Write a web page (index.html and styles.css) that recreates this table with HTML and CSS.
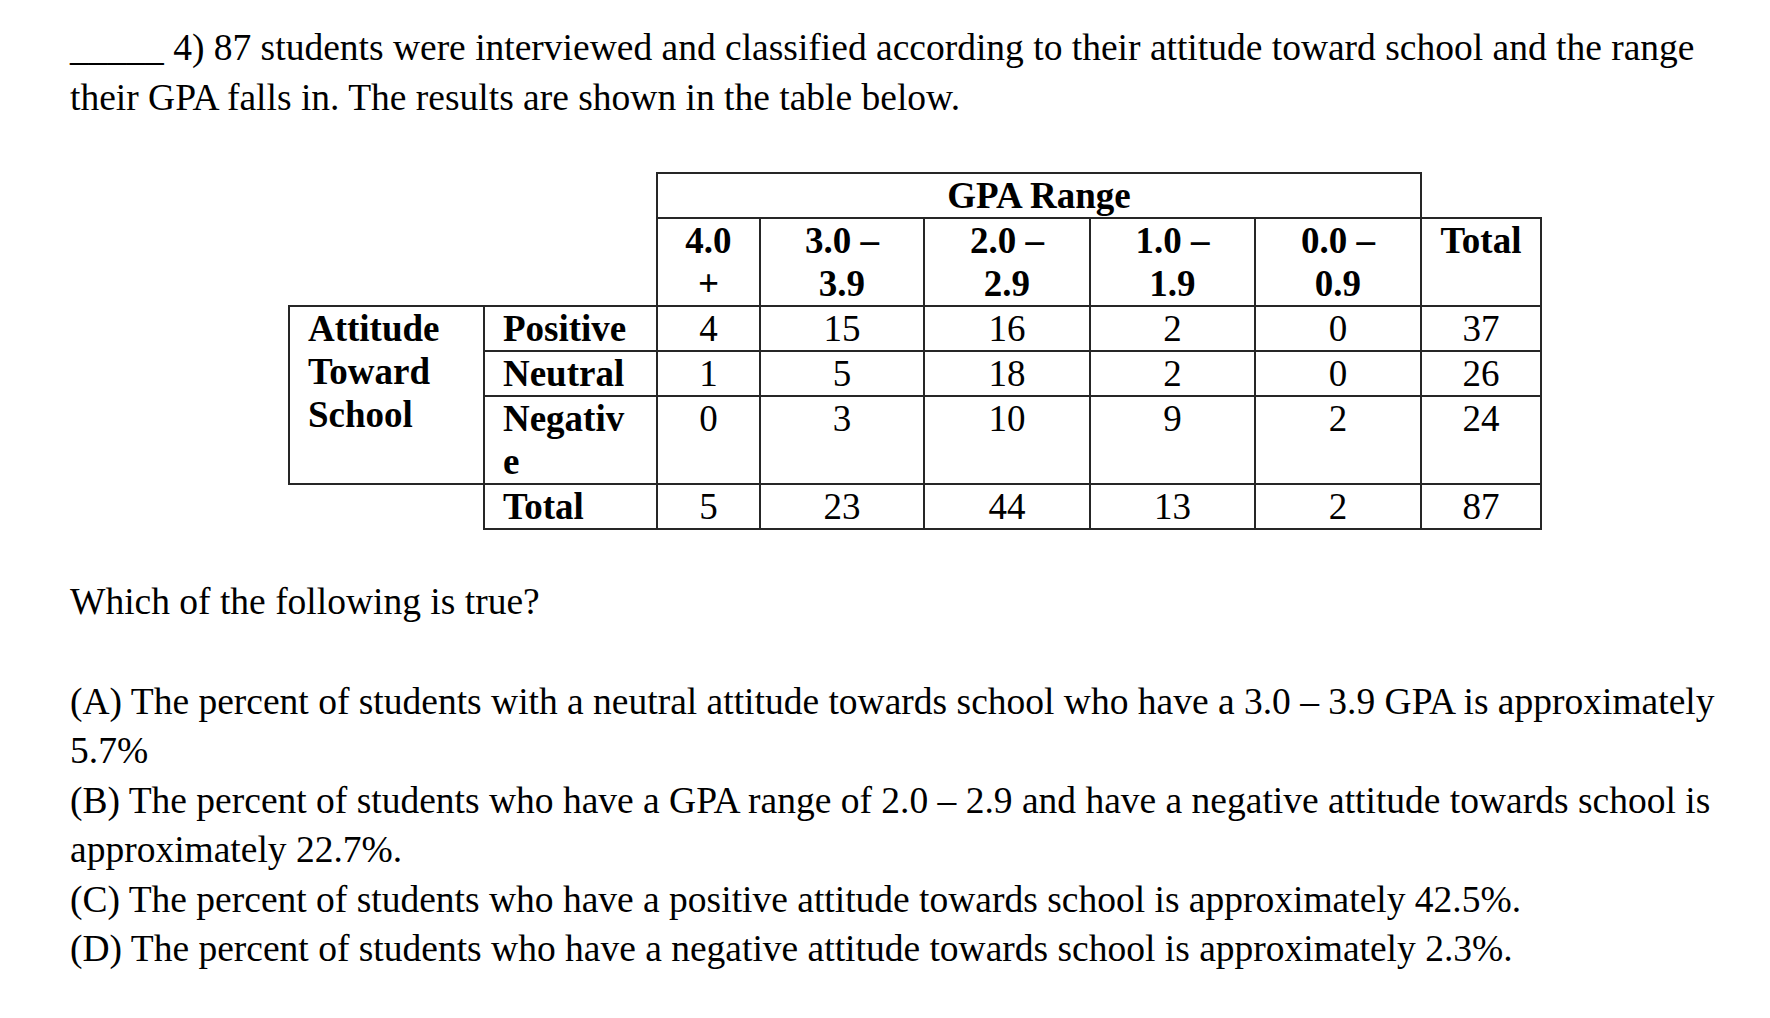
FILE: index.html
```html
<!DOCTYPE html>
<html lang="en">
<head>
<meta charset="utf-8">
<title>GPA attitude question</title>
<link rel="stylesheet" href="styles.css">
</head>
<body>
<div class="page">
  <p class="para intro"><span class="blank">_____</span> 4) 87 students were interviewed and classified according to their attitude toward school and the range their GPA falls in. The results are shown in the table below.</p>

  <table class="grid">
    <colgroup>
      <col class="c-att">
      <col class="c-lab">
      <col class="c-40">
      <col class="c-30">
      <col class="c-20">
      <col class="c-10">
      <col class="c-00">
      <col class="c-tot">
    </colgroup>
    <tr>
      <td class="empty"></td>
      <td class="empty"></td>
      <th colspan="5" class="head">GPA Range</th>
      <td class="empty"></td>
    </tr>
    <tr>
      <td class="empty"></td>
      <td class="empty"></td>
      <th class="head">4.0 +</th>
      <th class="head">3.0 – 3.9</th>
      <th class="head">2.0 – 2.9</th>
      <th class="head">1.0 – 1.9</th>
      <th class="head">0.0 – 0.9</th>
      <th class="head">Total</th>
    </tr>
    <tr>
      <th rowspan="3" class="label">Attitude Toward School</th>
      <th class="label">Positive</th>
      <td>4</td><td>15</td><td>16</td><td>2</td><td>0</td><td>37</td>
    </tr>
    <tr>
      <th class="label">Neutral</th>
      <td>1</td><td>5</td><td>18</td><td>2</td><td>0</td><td>26</td>
    </tr>
    <tr>
      <th class="label break">Negative</th>
      <td>0</td><td>3</td><td>10</td><td>9</td><td>2</td><td>24</td>
    </tr>
    <tr>
      <td class="empty"></td>
      <th class="label">Total</th>
      <td>5</td><td>23</td><td>44</td><td>13</td><td>2</td><td>87</td>
    </tr>
  </table>

  <p class="para ask">Which of the following is true?</p>

  <div class="options">
    <p class="opt">(A) The percent of students with a neutral attitude towards school who have a 3.0 – 3.9 GPA is approximately 5.7%</p>
    <p class="opt">(B) The percent of students who have a GPA range of 2.0 – 2.9 and have a negative attitude towards school is approximately 22.7%.</p>
    <p class="opt">(C) The percent of students who have a positive attitude towards school is approximately 42.5%.</p>
    <p class="opt">(D) The percent of students who have a negative attitude towards school is approximately 2.3%.</p>
  </div>
</div>
</body>
</html>
```

FILE: styles.css
```css
html, body {
  margin: 0;
  padding: 0;
  background: #ffffff;
}

body {
  font-family: "Liberation Serif", "Times New Roman", serif;
  color: #000000;
  font-size: 37.5px;
  line-height: 49.5px;
}

.page {
  padding: 23px 10px 0 70px;
  width: 1690px;
}

.para {
  margin: 0;
}

.intro {
  margin-bottom: 50px;
}

.grid {
  border-collapse: collapse;
  table-layout: fixed;
  width: 1252px;
  margin: 0 auto;
  font-size: 37px;
  line-height: 43px;
}

.c-att { width: 195px; }
.c-lab { width: 173px; }
.c-40 { width: 103px; }
.c-30 { width: 164px; }
.c-20 { width: 166px; }
.c-10 { width: 165px; }
.c-00 { width: 166px; }
.c-tot { width: 120px; }

.grid td,
.grid th {
  border: 2px solid #262626;
  padding: 0 18px;
  vertical-align: top;
  text-align: center;
  font-weight: normal;
  overflow-wrap: anywhere;
}

.grid th.head {
  font-weight: bold;
}

.grid th.label {
  font-weight: bold;
  text-align: left;
}

.grid td.empty {
  border: none;
}

.ask {
  margin-top: 47px;
}

.options {
  margin-top: 50px;
}

.opt {
  margin: 0;
}
```
